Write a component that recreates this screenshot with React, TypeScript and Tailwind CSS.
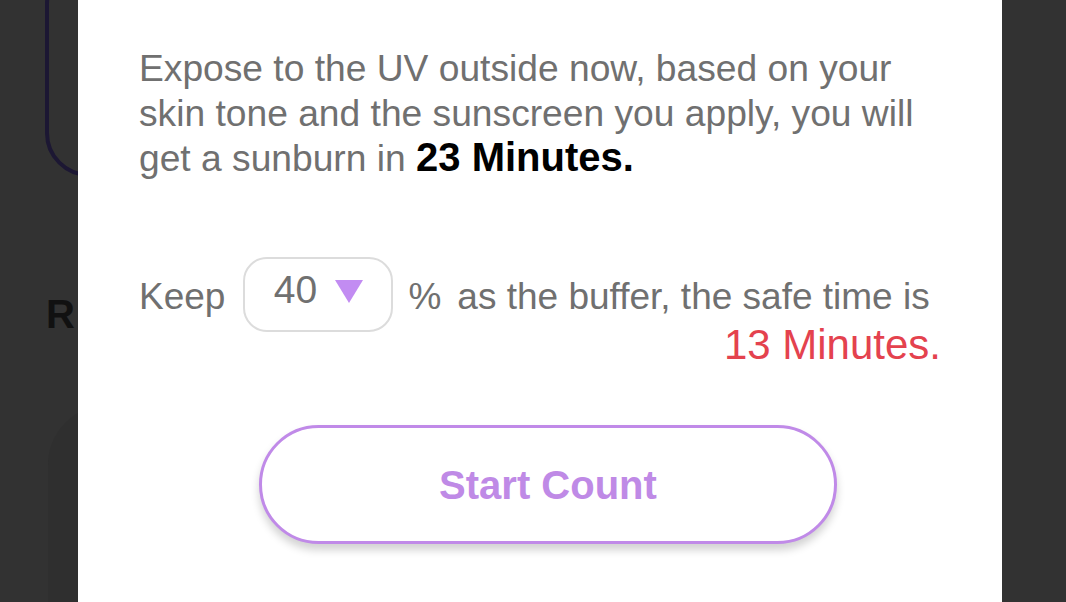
export default function App() {
  return (
    <div className="relative h-[602px] w-[1066px] overflow-hidden bg-[#323232] font-['Liberation_Sans',Arial,sans-serif]">
      {/* background screen behind the dialog */}
      <div className="absolute left-[45px] top-[-40px] h-[217px] w-[200px] rounded-[44px] border-[4px] border-[#1c1733]" />
      <div className="absolute left-[46px] top-[284px] text-[40px] font-bold text-[#111]">R</div>
      <div className="absolute left-[48px] top-[405px] h-[240px] w-[200px] rounded-tl-[60px] bg-[#2f2f2f]" />

      {/* dialog */}
      <div className="absolute left-[78px] top-0 flex h-[602px] w-[924px] flex-col bg-white pl-[61px] pr-[61px] pt-[46px]">
        <p className="w-[800px] text-[37.2px] leading-[45px] text-[#707070]">
          Expose to the UV outside now, based on your skin tone and the sunscreen you apply, you will get a sunburn in{' '}
          <span className="text-[40px] leading-none font-bold text-black">23 Minutes.</span>
        </p>

        <div className="mt-[76px] flex items-center text-[37px] text-[#707070]">
          <span className="mt-[4px]">Keep</span>
          <div className="ml-[18px] flex h-[75px] w-[150px] items-center justify-center gap-[18px] rounded-[24px] border-2 border-[#dcdcdc]">
            <span className="-mt-[8px] text-[39px]">40</span>
            <svg width="28" height="23" viewBox="0 0 28 23" className="-mt-[6px]">
              <path d="M0 0 H28 L14 23 Z" fill="#c28cf2" />
            </svg>
          </div>
          <span className="ml-[15px] mt-[4px]">%</span>
          <span className="ml-[16px] mt-[4px]">as the buffer, the safe time is</span>
        </div>
        <div className="-mt-[11px] text-right text-[42px] leading-[48px] text-[#e4424e]">13 Minutes.</div>

        <div className="mt-[56px] flex justify-center pl-[16px]">
          <button className="h-[119px] w-[578px] rounded-full border-[3px] border-[#c08ae8] bg-white text-[40px] font-bold text-[#bf8ae6] shadow-[0_6px_8px_rgba(0,0,0,0.18)]">
            Start Count
          </button>
        </div>
      </div>
    </div>
  );
}
